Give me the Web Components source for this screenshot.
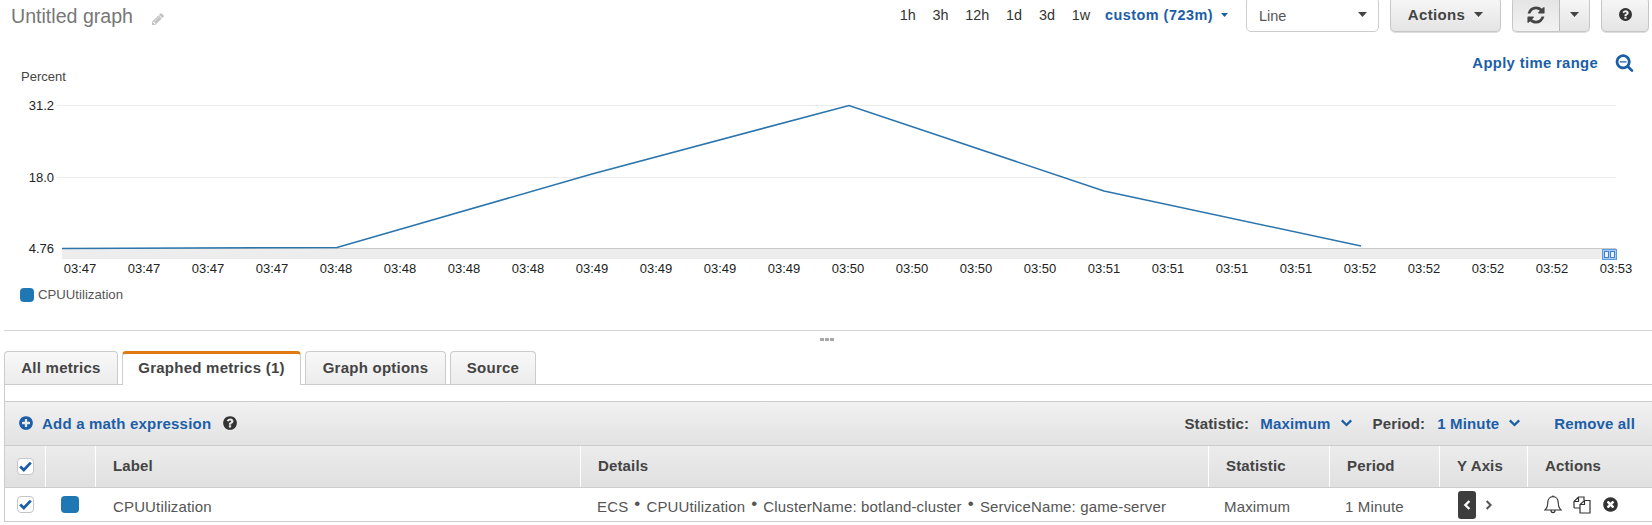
<!DOCTYPE html>
<html lang="en">
<head>
<meta charset="utf-8">
<title>Untitled graph</title>
<style>
html,body{margin:0;padding:0;background:#fff;height:525px;overflow:hidden}
body{font-family:"Liberation Sans",Arial,sans-serif;color:#444;width:1652px}
</style>
</head>
<body>
<cw-graph-header></cw-graph-header>
<cw-chart></cw-chart>
<cw-divider></cw-divider>
<cw-tabs></cw-tabs>
<cw-panel>
  <cw-toolbar></cw-toolbar>
  <cw-metric-table></cw-metric-table>
</cw-panel>
<script>
const P={
 pencil:"M491 1536l91-91-235-235-91 91v107h128v128h107zm523-928q0-22-22-22-10 0-17 7l-542 542q-7 7-7 17 0 22 22 22 10 0 17-7l542-542q7-7 7-17zm-54-192l416 416-832 832h-416v-416zm683 96q0 53-37 90l-166 166-416-416 166-165q36-38 90-38 53 0 91 38l235 234q37 39 37 91z",
 refresh:"M1639 1056q0 5-1 7-64 268-268 434.5t-478 166.5q-146 0-282.5-55t-243.5-157l-129 129q-19 19-45 19t-45-19-19-45v-448q0-26 19-45t45-19h448q26 0 45 19t19 45-19 45l-137 137q71 66 161 102t187 36q134 0 250-65t186-179q11-17 53-117 8-23 30-23h192q13 0 22.5 9.5t9.5 22.5zm25-800v448q0 26-19 45t-45 19h-448q-26 0-45-19t-19-45 19-45l138-138q-148-137-349-137-134 0-250 65t-186 179q-11 17-53 117-8 23-30 23h-199q-13 0-22.5-9.5t-9.5-22.5v-7q65-268 270-434.5t480-166.5q146 0 284 55.5t245 156.5l130-129q19-19 45-19t45 19 19 45z",
 question:"M1024 1376v-192q0-14-9-23t-23-9h-192q-14 0-23 9t-9 23v192q0 14 9 23t23 9h192q14 0 23-9t9-23zm256-672q0-88-55.5-163t-138.5-116-170-41q-243 0-371 213-15 24 8 43l132 100q7 6 19 6 16 0 25-12 53-68 86-92 34-24 86-24 48 0 85.5 26t37.5 59q0 38-20 61t-68 45q-63 28-115.5 86.5t-52.5 125.5v36q0 14 9 23t23 9h192q14 0 23-9t9-23q0-19 21.5-49.5t54.5-49.5q32-18 49-28.5t46-35 44.5-48 28-60.5 12.5-81zm384 192q0 209-103 385.5t-279.5 279.5-385.5 103-385.5-103-279.5-279.5-103-385.5 103-385.5 279.5-279.5 385.5-103 385.5 103 279.5 279.5 103 385.5z",
 plus:"M1344 960v-128q0-26-19-45t-45-19h-256v-256q0-26-19-45t-45-19h-128q-26 0-45 19t-19 45v256h-256q-26 0-45 19t-19 45v128q0 26 19 45t45 19h256v256q0 26 19 45t45 19h128q26 0 45-19t19-45v-256h256q26 0 45-19t19-45zm320-64q0 209-103 385.5t-279.5 279.5-385.5 103-385.5-103-279.5-279.5-103-385.5 103-385.5 279.5-279.5 385.5-103 385.5 103 279.5 279.5 103 385.5z",
 times:"M1277 1122q0-26-19-45l-181-181 181-181q19-19 19-45 0-27-19-46l-90-90q-19-19-46-19-26 0-45 19l-181 181-181-181q-19-19-45-19-27 0-46 19l-90 90q-19 19-19 46 0 26 19 45l181 181-181 181q-19 19-19 45 0 27 19 46l90 90q19 19 46 19 26 0 45-19l181-181 181 181q19 19 45 19 27 0 46-19l90-90q19-19 19-46zm387-226q0 209-103 385.5t-279.5 279.5-385.5 103-385.5-103-279.5-279.5-103-385.5 103-385.5 279.5-279.5 385.5-103 385.5 103 279.5 279.5 103 385.5z",
 searchMinus:"M1088 800v64q0 13-9.5 22.5t-22.5 9.5h-576q-13 0-22.5-9.5t-9.5-22.5v-64q0-13 9.5-22.5t22.5-9.5h576q13 0 22.5 9.5t9.5 22.5zm128 32q0-185-131.5-316.5t-316.5-131.5-316.5 131.5-131.5 316.5 131.5 316.5 316.5 131.5 316.5-131.5 131.5-316.5zm512 832q0 53-37.5 90.5t-90.5 37.5q-54 0-90-38l-343-342q-179 124-399 124-143 0-273.5-55.5t-225-150-150-225-55.5-273.5 55.5-273.5 150-225 225-150 273.5-55.5 273.5 55.5 225 150 150 225 55.5 273.5q0 220-124 399l343 343q37 37 37 90z"
};
const fa=(n,s,c)=>`<svg width="${s}" height="${s}" viewBox="0 0 1792 1792" style="display:block;flex:none"><path fill="${c}" d="${P[n]}"/></svg>`;
const caret=(c,w=9)=>`<svg width="${w}" height="${w>7?5:4}" viewBox="0 0 11 6" preserveAspectRatio="none" style="display:block;flex:none"><path fill="${c}" d="M0 0h11L5.500 6z"/></svg>`;
const chev=c=>`<svg width="11" height="8" viewBox="0 0 11 8" style="display:block;flex:none"><path fill="none" stroke="${c}" stroke-width="2.300" d="M.8 1.400L5.500 6l4.700-4.600"/></svg>`;
const check=`<svg width="13" height="11" viewBox="0 0 13 11" style="display:block"><path fill="none" stroke="#1b5ea8" stroke-width="2.800" d="M1.200 5.600l3.600 3.400L11.800 1.600"/></svg>`;
function def(name,css,html){
  customElements.define(name,class extends HTMLElement{
    constructor(){super();const r=this.attachShadow({mode:"open"});
      r.innerHTML=`<style>${css}</style>${html}`;}
  });
}
const BLUE="#1b5ea8",FONT=`font-family:"Liberation Sans",Arial,sans-serif;`;

def("cw-btn",`
:host{display:flex;align-items:center;justify-content:center;box-sizing:border-box;height:35px;border:1px solid #c6c6c6;border-radius:5px;
 background:linear-gradient(#f7f7f7,#e4e4e4);color:#444;font:bold 15px "Liberation Sans",Arial,sans-serif;letter-spacing:.35px;gap:9px;box-shadow:0 1px 0 #ddd}
`,`<slot></slot>`);

def("cw-graph-header",`
:host{display:flex;align-items:center;height:35px;margin-top:-3px;${FONT}position:relative}
.title{font-size:19.6px;color:#777;margin-left:11px;position:relative;top:2px}
.pen{margin-left:18px;position:relative;top:4px}
.grow{flex:1}
.range{display:flex;gap:16.8px;font-size:14.4px;color:#333;align-items:center;margin-right:18px}
.custom{color:${BLUE};font-weight:bold;letter-spacing:.5px;display:flex;align-items:center;gap:8px;margin-left:-2px}
.sel{box-sizing:border-box;width:133px;height:35px;border:1px solid #ccc;border-radius:5px;background:#fff;display:flex;align-items:center;justify-content:space-between;padding:0 11px 0 12px;font-size:14.5px;color:#555;margin-right:11px}
.sel span{position:relative;top:1px}
.act{width:111px;margin-right:11px}
.rf{width:48px;border-radius:5px 0 0 5px;background:linear-gradient(#e4e4e4,#f2f2f2);border-right:1px solid #bbb}
.dd{width:30px;border-radius:0 5px 5px 0;border-left:0;margin-right:11px}
.help{width:48px;margin-right:3px}
`,`<span class="title">Untitled graph</span><span class="pen">${fa("pencil",14,"#c4c4c4")}</span><span class="grow"></span>
<div class="range"><span>1h</span><span>3h</span><span>12h</span><span>1d</span><span>3d</span><span>1w</span><span class="custom">custom (723m) ${caret(BLUE,7)}</span></div>
<div class="sel"><span>Line</span>${caret("#444")}</div>
<cw-btn class="act">Actions ${caret("#444")}</cw-btn>
<cw-btn class="rf">${fa("refresh",20,"#444")}</cw-btn><cw-btn class="dd">${caret("#444")}</cw-btn>
<cw-btn class="help">${fa("question",15,"#333")}</cw-btn>`);

const ticks=["47","47","47","47","48","48","48","48","49","49","49","49","50","50","50","50","51","51","51","51","52","52","52","52","53"];
def("cw-chart",`
:host{display:block;height:298px;position:relative;${FONT}}
svg.c{display:block;position:absolute;left:0;top:0}
text{font:13px "Liberation Sans",Arial,sans-serif;fill:#222}
.apply{position:absolute;top:15px;right:18px;height:30px;display:flex;align-items:center;gap:17px;color:${BLUE};font-weight:bold;font-size:14.8px;letter-spacing:.35px}
.apply span{position:relative;top:1px}
.legend{position:absolute;left:20px;top:255px;display:flex;align-items:center;gap:4px;font-size:13.2px;color:#555}
.sw{width:14px;height:14px;border-radius:4px;background:#1f77b4}
`,`<svg class="c" width="1652" height="262" viewBox="0 32 1652 262">
<line x1="57" x2="1616" y1="105.5" y2="105.5" stroke="#ececec"/>
<line x1="57" x2="1616" y1="177.5" y2="177.5" stroke="#ececec"/>
<rect x="62" y="248" width="1554" height="11" fill="#ededed"/>
<line x1="62" x2="1616" y1="248.5" y2="248.5" stroke="#c9c9c9"/>
<rect x="1602.5" y="249.5" width="14" height="10" fill="#a9ccf0" stroke="#5a9ae0"/>
<rect x="1604.5" y="251.5" width="4" height="6" fill="#eaf3fc" stroke="#3f80cc"/><rect x="1610.5" y="251.5" width="4" height="6" fill="#eaf3fc" stroke="#3f80cc"/>
<polyline fill="none" stroke="#2a75ad" stroke-width="1.6" points="62,248.500 337,247.500 592,174 849,105.500 1104,191 1361,246"/>
<text x="21" y="81" style="fill:#444">Percent</text>
<text x="54" y="110" text-anchor="end">31.2</text><text x="54" y="182" text-anchor="end">18.0</text><text x="54" y="252.500" text-anchor="end">4.76</text>
${ticks.map((t,i)=>`<text x="${80+64*i}" y="273" text-anchor="middle">03:${t}</text>`).join("")}
</svg>
<div class="apply"><span>Apply time range</span>${fa("searchMinus",19,BLUE)}</div>
<div class="legend"><span class="sw"></span><span>CPUUtilization</span></div>`);

def("cw-divider",`
:host{display:block;height:21px;position:relative;margin-left:4px;border-top:1px solid #d4d4d4;box-sizing:border-box}
.g{position:absolute;left:816px;top:7px;display:flex;gap:1px}
.g i{width:4px;height:3px;background:#a8a8a8;display:block}
`,`<div class="g"><i></i><i></i><i></i></div>`);

def("cw-tab",`
:host{display:flex;align-items:center;justify-content:center;box-sizing:border-box;height:33px;padding-bottom:2px;border:1px solid #ccc;border-bottom:0;border-radius:4px 4px 0 0;background:linear-gradient(#f8f8f8,#ececec);
 font:bold 15px "Liberation Sans",Arial,sans-serif;letter-spacing:.25px;color:#444}
:host([active]){background:#fff;border-top:3px solid #e07b13;height:34px;padding-bottom:4px;margin-bottom:-1px;position:relative;z-index:1}
`,`<slot></slot>`);

def("cw-tabs",`
:host{display:flex;gap:4px;padding-left:4px;height:33px;position:relative}
`,`<cw-tab style="width:114px">All metrics</cw-tab><cw-tab active style="width:179px">Graphed metrics (1)</cw-tab><cw-tab style="width:141px">Graph options</cw-tab><cw-tab style="width:86px">Source</cw-tab>`);

def("cw-panel",`
:host{display:block;margin-left:4px;border-top:1px solid #ccc;border-left:1px solid #ccc;padding-top:16px;box-sizing:border-box}
`,`<slot></slot>`);

def("cw-toolbar",`
:host{display:flex;align-items:center;height:44px;box-sizing:border-box;border-top:1px solid #ccc;background:linear-gradient(#f1f1f1,#e2e2e2);padding:0 17px 1px 13px;${FONT}font-weight:bold;font-size:15px;letter-spacing:.15px;color:#444}
a{color:${BLUE};text-decoration:none}
.add{margin-left:8px;letter-spacing:.2px}.q{margin-left:11px}.g{flex:1}
`,`${fa("plus",16,BLUE)}<a class="add">Add a math expression</a><span class="q">${fa("question",16,"#333")}</span><span class="g"></span>
<span>Statistic:</span><a style="margin-left:11px">Maximum</a><span style="margin-left:10px">${chev(BLUE)}</span>
<span style="margin-left:21px">Period:</span><a style="margin-left:12px">1 Minute</a><span style="margin-left:10px">${chev(BLUE)}</span>
<a style="margin-left:34px">Remove all</a>`);

def("cw-check",`
:host{display:flex;align-items:center;justify-content:center;box-sizing:border-box;width:17px;height:17px;border:1px solid #c4c4c4;border-radius:4px;background:#fff}
`,check);

const cols="40px 50px 485px 628px 121px 110px 88px 1fr";
def("cw-metric-table",`
:host{display:block;${FONT}font-size:15px;color:#555}
.r{display:grid;grid-template-columns:${cols};align-items:stretch}
.h{height:43px;box-sizing:border-box;border-top:1px solid #ccc;border-bottom:1px solid #ccc;background:linear-gradient(#ececec,#e0e0e0);font-weight:bold;color:#444;letter-spacing:.15px}
.h>div{display:flex;align-items:center;padding-left:17px;padding-bottom:2px;border-left:1px solid #fff;box-sizing:border-box}
.h>div:first-child,.b>div:first-child{border-left:0;padding-left:12px}
.h>div:first-child{padding-bottom:0}
.b{height:34px;box-sizing:border-box;border-bottom:1px solid #ccc;letter-spacing:.15px}
.b>div{display:flex;align-items:center;padding-left:17px;box-sizing:border-box}
.b>.t{padding-top:3px}
.sw{width:18px;height:17px;border-radius:4px;background:#1f77b4}
.dot{font-size:17px;margin:0 6px;position:relative;top:-2px}
.ya{width:18px;height:28px;border-radius:3px;background:#3d3d3d;display:flex;align-items:center;justify-content:center}
`,`<div class="r h"><div><cw-check></cw-check></div><div></div><div>Label</div><div>Details</div><div>Statistic</div><div>Period</div><div>Y Axis</div><div>Actions</div></div>
<div class="r b"><div><cw-check></cw-check></div><div style="padding-left:16px"><span class="sw"></span></div><div class="t" style="padding-left:18px">CPUUtilization</div>
<div class="t" style="padding-left:17px;white-space:nowrap">ECS<span class="dot">•</span>CPUUtilization<span class="dot">•</span>ClusterName: botland-cluster<span class="dot">•</span>ServiceName: game-server</div>
<div class="t" style="padding-left:16px">Maximum</div><div class="t" style="padding-left:16px">1 Minute</div>
<div style="padding-left:19px"><span class="ya"><svg width="8" height="12" viewBox="0 0 8 12"><path fill="none" stroke="#fff" stroke-width="2.400" d="M6.400 2L2.400 6l4 4"/></svg></span><svg style="margin-left:9px" width="8" height="12" viewBox="0 0 8 12"><path fill="none" stroke="#555" stroke-width="2" d="M1.600 2l4 4-4 4"/></svg></div>
<div style="padding-left:17px;gap:11px">
<svg width="18" height="19" viewBox="0 0 18 19" style="flex:none"><path fill="none" stroke="#333" stroke-width="1.200" d="M1 15c2.200-2 2.800-4.200 2.800-7.500C3.800 4 6 1.700 9 1.700S14.200 4 14.200 7.500c0 3.300.6 5.500 2.800 7.500zM7 15.300c0 3 4 3 4 0M9 1.700V.6"/></svg>
<svg width="18" height="18" viewBox="0 0 18 18" style="flex:none"><path fill="#fff" stroke="#333" stroke-width="1.200" d="M1 12V5.500L5.500 1H11v3.500M1 12h6M5.500 1v4.500H1"/><path fill="#fff" stroke="#333" stroke-width="1.200" d="M7 17V8.500L11.500 4.500H17V17zM7 8.500h4.500v-4"/></svg>
${fa("times",17,"#333")}</div></div>`);
</script>
</body>
</html>
